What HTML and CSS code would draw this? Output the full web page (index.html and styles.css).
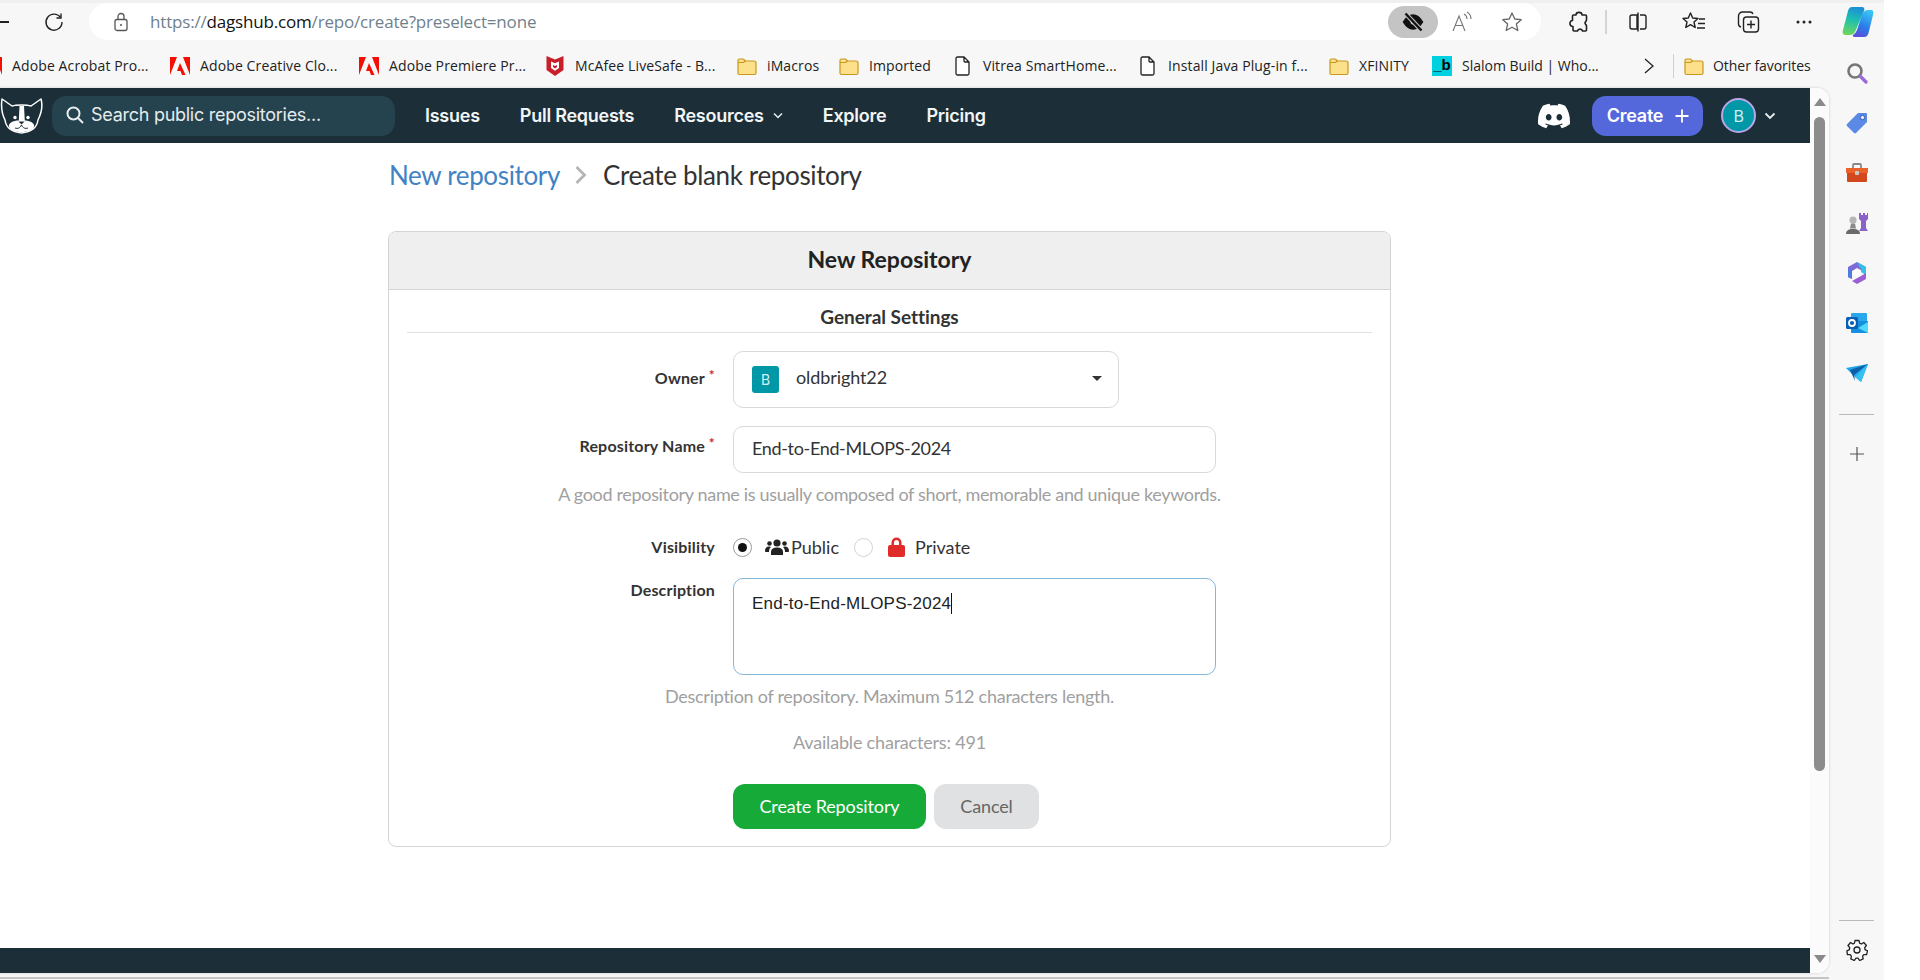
FILE: index.html
```html
<!DOCTYPE html>
<html lang="en">
<head>
<meta charset="utf-8">
<title>New Repository - DagsHub</title>
<link rel="stylesheet" href="styles.css">
</head>
<body>
<div class="window">
  <header class="toolbar">
    <span class="back-stub"></span>
    <svg class="tb-reload" width="22" height="22" viewBox="0 0 22 22" fill="none" stroke="#222" stroke-width="1.4"><path d="M17.5 6.5A8 8 0 1 0 19 11"/><path d="M18 2.5v4.5h-4.5"/></svg>
    <div class="address">
      <svg class="lock" width="16" height="20" viewBox="0 0 16 20" fill="none" stroke="#555" stroke-width="1.3"><rect x="2" y="7.5" width="12" height="11" rx="2"/><path d="M5 7.5V4.5a3 3 0 0 1 6 0v3"/><circle cx="8" cy="13" r="1" fill="#555" stroke="none"/></svg>
      <div class="url"><span class="url-dim">https://</span><span class="url-host">dagshub.com</span><span class="url-dim">/repo/create?preselect=none</span></div>
      <div class="addr-end">
        <span class="eye-pill">
          <svg width="22" height="22" viewBox="0 0 22 22" fill="none" stroke="#111" stroke-width="2.4"><path d="M2 11c3-5 6-6.500 9-6.500s6 1.500 9 6.500c-3 5-6 6.500-9 6.500S5 16 2 11z" fill="#111"/><circle cx="11" cy="11" r="2.500" fill="#c4c4c4" stroke="none"/><path d="M3.500 2.500 19.500 19.500" stroke="#c4c4c4" stroke-width="4.500"/><path d="M3.500 2.500 19.500 19.500"/></svg>
        </span>
        <svg class="read" width="24" height="22" viewBox="0 0 24 22" fill="none" stroke="#777" stroke-width="1.1"><path d="M2 20 8 5l6 15M4.500 14.500h7"/><path d="M13 3c2 1 3 3 3 5M16 1c2.500 1.500 4 4 4 7"/></svg>
        <svg class="star" width="24" height="24" viewBox="0 0 24 24" fill="none" stroke="#666" stroke-width="1.3" stroke-linejoin="round"><path d="m12 3 2.800 6 6.400.7-4.800 4.400 1.400 6.400L12 17.200 6.200 20.500l1.400-6.400L2.800 9.700 9.200 9z"/></svg>
      </div>
    </div>
    <div class="tb-tools">
      <svg class="t-ext" width="22" height="24" viewBox="0 0 22 24" fill="none" stroke="#222" stroke-width="1.6" stroke-linejoin="round"><path d="M8 5C8 1.500 14 1.500 14 5h3.500a1 1 0 0 1 1 1v3.500C19 11 17 11.500 17 13s2 2 1.500 3.500V20a1 1 0 0 1-1 1h-3c-.5-2.500-4.500-2.500-5 0H6a1 1 0 0 1-1-1v-3.500C1 16.500 1 10.500 4.500 10.500V6a1 1 0 0 1 1-1z"/></svg>
      <span class="tb-sep"></span>
      <svg class="t-split" width="20" height="22" viewBox="0 0 20 22" fill="none" stroke="#222" stroke-width="1.4"><path d="M9 4H4a2 2 0 0 0-2 2v10a2 2 0 0 0 2 2h5zM10 1.500v19M12 4h4a2 2 0 0 1 2 2v10a2 2 0 0 1-2 2h-4"/></svg>
      <svg class="t-favs" width="26" height="24" viewBox="0 0 26 24" fill="none" stroke="#222" stroke-width="1.4" stroke-linejoin="round"><path d="m9.500 3 2.200 5 5.300.5-4 3.600 1.200 5.400-4.700-2.800-4.700 2.800 1.200-5.400-4-3.600 5.300-.5z"/><path d="M18 9h6M17 13.500h7M16 18h8"/></svg>
      <svg class="t-coll" width="24" height="24" viewBox="0 0 24 24" fill="none" stroke="#222" stroke-width="1.4"><path d="M4 17c-2-.5-2.500-2-2.500-3V6a4 4 0 0 1 4-4H13c1 0 2.500.5 3 2"/><rect x="6.500" y="7" width="15" height="15" rx="3"/><path d="M14 10.500v8M10 14.500h8"/></svg>
      <svg class="t-dots" width="20" height="6" viewBox="0 0 20 6" fill="#222"><circle cx="4" cy="3" r="1.500"/><circle cx="10" cy="3" r="1.500"/><circle cx="16" cy="3" r="1.500"/></svg>
      <svg class="t-copilot" width="32" height="30" viewBox="0 0 32 30"><defs><linearGradient id="cpa" x1="0.500" y1="0" x2="0.300" y2="1"><stop offset="0" stop-color="#1b8fd8"/><stop offset=".45" stop-color="#1fc0b0"/><stop offset="1" stop-color="#6fd65a"/></linearGradient><linearGradient id="cpb" x1="0.700" y1="0" x2="0.300" y2="1"><stop offset="0" stop-color="#39c6f4"/><stop offset=".6" stop-color="#2a7be8"/><stop offset="1" stop-color="#5a4fd8"/></linearGradient></defs><path d="M10 0h10c2 0 3 2 2 4L13 25c-1 2-3 3-5 3H4c-3 0-4-2-3-5L6 4c.700-2.500 2-4 4-4z" fill="url(#cpa)"/><path d="M22 30H13c-2 0-2.500-1-2-2 2-1 3-3 4-5l5-15c1-3 3-5 6-5h3c2 0 3 2 2 5l-4 16c-.700 4-2 6-5 6z" fill="url(#cpb)"/></svg>
    </div>
  </header>

  <div class="left-col">
    <nav class="bookmarks">
      <a class="bm bm-first"><svg class="ic-adobe" width="20" height="20" viewBox="0 0 20 20"><path d="M0 1h7L0 19zM13 1h7v18zM10 7l5.500 12h-3.500l-1.500-4H7z" fill="#f40f02"/></svg><span class="bm-label w138">Adobe Acrobat Pro...</span></a>
      <a class="bm"><svg class="ic-adobe" width="20" height="20" viewBox="0 0 20 20"><path d="M0 1h7L0 19zM13 1h7v18zM10 7l5.500 12h-3.500l-1.500-4H7z" fill="#f40f02"/></svg><span class="bm-label w139">Adobe Creative Clo...</span></a>
      <a class="bm"><svg class="ic-adobe" width="20" height="20" viewBox="0 0 20 20"><path d="M0 1h7L0 19zM13 1h7v18zM10 7l5.500 12h-3.500l-1.500-4H7z" fill="#f40f02"/></svg><span class="bm-label w136">Adobe Premiere Pr...</span></a>
      <a class="bm"><svg width="20" height="22" viewBox="0 0 20 22"><path d="M1.500 1 10 4.500 18.500 1v14L10 21 1.500 15z" fill="#c8202a"/><path d="M6 6.500l4 1.800 4-1.800v6.500L10 15.800 6 13z" fill="#fff"/><path d="M8 10l2 1 2-1v2l-2 1.500L8 12z" fill="#c8202a"/></svg><span class="bm-label w142">McAfee LiveSafe - B...</span></a>
      <a class="bm"><svg class="ic-folder" width="20" height="20" viewBox="0 0 20 20"><use href="#folder"/></svg><span class="bm-label w52">iMacros</span></a>
      <a class="bm"><svg class="ic-folder" width="20" height="20" viewBox="0 0 20 20"><use href="#folder"/></svg><span class="bm-label w62">Imported</span></a>
      <a class="bm bm-doc"><svg width="18" height="20" viewBox="0 0 18 20"><use href="#doc"/></svg><span class="bm-label w133">Vitrea SmartHome...</span></a>
      <a class="bm bm-doc"><svg width="18" height="20" viewBox="0 0 18 20"><use href="#doc"/></svg><span class="bm-label w143">Install Java Plug-in f...</span></a>
      <a class="bm bm-xf"><svg class="ic-folder" width="20" height="20" viewBox="0 0 20 20"><use href="#folder"/></svg><span class="bm-label w52">XFINITY</span></a>
      <a class="bm bm-sl"><span class="slalom">_b</span><span class="bm-label w136">Slalom Build | Who...</span></a>
      <svg class="bm-more" width="12" height="18" viewBox="0 0 12 18" fill="none" stroke="#222" stroke-width="1.3"><path d="m2 2 8 7-8 7"/></svg>
      <span class="bm-sep"></span>
      <a class="bm bm-other"><svg class="ic-folder" width="20" height="20" viewBox="0 0 20 20"><use href="#folder"/></svg><span class="bm-label">Other favorites</span></a>
    </nav>

    <div class="viewport">
      <div class="page">
        <div class="site-nav">
          <svg class="dog" width="44" height="40" viewBox="0 0 44 40">
            <path d="M2 3 12 10C16 8.500 27 8.500 31 10L41 3C43 10 41 18 38 24 37 31 32 36 21.500 37 11 36 6 31 5 24 2 18 1 10 2 3Z" fill="#1c2e38" stroke="#fff" stroke-width="1.500" stroke-linejoin="round"/>
            <path d="M19.500 10h4.500l.8 15h-6z" fill="#fff"/>
            <path d="M9 31C8 27 13 24.500 19 24.500h5C30 24.500 35 27 34 31 32 35 27 36 21.500 36 16 36 11 35 9 31Z" fill="#fff"/>
            <path d="M18.500 25.500h6l-3 3z" fill="#1c2e38"/>
            <path d="M15 32c3 1 5 0 6.500-3 1.500 3 3.500 4 6.500 3" fill="none" stroke="#1c2e38" stroke-width="1"/>
            <circle cx="15" cy="21.500" r="1.700" fill="#fff"/>
            <circle cx="28" cy="21.500" r="1.700" fill="#fff"/>
          </svg>
          <div class="search">
            <svg width="20" height="20" viewBox="0 0 20 20" fill="none" stroke="#e8edef" stroke-width="2"><circle cx="8.500" cy="8.500" r="6"/><path d="m13 13 5 5"/></svg>
            <span>Search public repositories...</span>
          </div>
          <a class="nl nl-issues">Issues</a>
          <a class="nl">Pull Requests</a>
          <a class="nl">Resources<svg class="caret" width="12" height="8" viewBox="0 0 12 8" fill="none" stroke="#e8edef" stroke-width="1.500"><path d="m2 1.500 4 4 4-4"/></svg></a>
          <a class="nl nl-explore">Explore</a>
          <a class="nl">Pricing</a>
          <svg class="discord" width="32" height="32" viewBox="0 0 24 24" fill="#fff"><path d="M20.317 4.3698a19.7913 19.7913 0 00-4.8851-1.5152.0741.0741 0 00-.0785.0371c-.211.3753-.4447.8648-.6083 1.2495-1.8447-.2762-3.68-.2762-5.4868 0-.1636-.3933-.4058-.8742-.6177-1.2495a.077.077 0 00-.0785-.037 19.7363 19.7363 0 00-4.8852 1.515.0699.0699 0 00-.0321.0277C.5334 9.0458-.319 13.5799.0992 18.0578a.0824.0824 0 00.0312.0561c2.0528 1.5076 4.0413 2.4228 5.9929 3.0294a.0777.0777 0 00.0842-.0276c.4616-.6304.8731-1.2952 1.226-1.9942a.076.076 0 00-.0416-.1057c-.6528-.2476-1.2743-.5495-1.8722-.8923a.077.077 0 01-.0076-.1277c.1258-.0943.2517-.1923.3718-.2914a.0743.0743 0 01.0776-.0105c3.9278 1.7933 8.18 1.7933 12.0614 0a.0739.0739 0 01.0785.0095c.1202.099.246.1981.3728.2924a.077.077 0 01-.0066.1276 12.2986 12.2986 0 01-1.873.8914.0766.0766 0 00-.0407.1067c.3604.698.7719 1.3628 1.225 1.9932a.076.076 0 00.0842.0286c1.961-.6067 3.9495-1.5219 6.0023-3.0294a.077.077 0 00.0313-.0552c.5004-5.177-.8382-9.6739-3.5485-13.6604a.061.061 0 00-.0312-.0286zM8.02 15.3312c-1.1825 0-2.1569-1.0857-2.1569-2.419 0-1.3332.9555-2.4189 2.157-2.4189 1.2108 0 2.1757 1.0952 2.1568 2.419 0 1.3332-.9555 2.4189-2.1569 2.4189zm7.9748 0c-1.1825 0-2.1569-1.0857-2.1569-2.419 0-1.3332.9554-2.4189 2.1569-2.4189 1.2108 0 2.1757 1.0952 2.1568 2.419 0 1.3332-.946 2.4189-2.1568 2.4189Z"/></svg>
          <a class="create-btn">Create<svg width="16" height="16" viewBox="0 0 16 16" fill="none" stroke="#fff" stroke-width="1.800"><path d="M8 1.500v13M1.500 8h13"/></svg></a>
          <span class="nav-avatar">B</span>
          <svg class="user-caret" width="12" height="8" viewBox="0 0 12 8" fill="none" stroke="#e8edef" stroke-width="1.800"><path d="m1.500 1.500 4.500 4.500 4.500-4.500"/></svg>
        </div>

        <main class="content">
          <div class="crumbs">
            <a class="crumb-link">New repository</a>
            <svg width="14" height="22" viewBox="0 0 14 22" fill="none" stroke="#b5b5b5" stroke-width="2.800"><path d="m2.500 3 8 8-8 8"/></svg>
            <span class="crumb-cur">Create blank repository</span>
          </div>

          <section class="card">
            <h1 class="card-head">New Repository</h1>
            <div class="form">
              <h2 class="section-title">General Settings</h2>

              <div class="row row-owner">
                <label class="lbl req">Owner</label>
                <div class="select">
                  <span class="owner-av">B</span>
                  <span class="owner-name">oldbright22</span>
                  <span class="sel-arrow"></span>
                </div>
              </div>

              <div class="row row-name">
                <label class="lbl req">Repository Name</label>
                <div class="input">End-to-End-MLOPS-2024</div>
              </div>
              <p class="hint hint-name">A good repository name is usually composed of short, memorable and unique keywords.</p>

              <div class="row row-vis">
                <label class="lbl">Visibility</label>
                <div class="radios">
                  <span class="radio on"></span>
                  <svg class="ic-people" width="24" height="18" viewBox="0 0 24 18" fill="#222"><circle cx="12" cy="5" r="3.600"/><circle cx="4.500" cy="5.500" r="2.300"/><circle cx="19.500" cy="5.500" r="2.300"/><path d="M6 17v-3c0-3 2-4.500 6-4.500s6 1.500 6 4.500v3z"/><path d="M0 13c0-3 1.500-4.500 4-4.500 1 0 1.500.2 2 .5-1.500 1-2 3-2 5H1c-.5 0-1-.5-1-1zM24 13c0-3-1.500-4.500-4-4.500-1 0-1.500.2-2 .5 1.500 1 2 3 2 5h3c.5 0 1-.5 1-1z"/></svg>
                  <span class="r-text r-public">Public</span>
                  <span class="radio"></span>
                  <svg class="ic-lock" width="17" height="20" viewBox="0 0 17 20" fill="#e02b2b"><path d="M3.500 8V5.500a5 5 0 0 1 10 0V8h-2.500V5.500a2.500 2.500 0 0 0-5 0V8z"/><rect y="8" width="17" height="12" rx="2"/></svg>
                  <span class="r-text">Private</span>
                </div>
              </div>

              <div class="row row-desc">
                <label class="lbl">Description</label>
                <div class="textarea"><span class="ta-text">End-to-End-MLOPS-2024</span><span class="ta-caret"></span></div>
              </div>
              <p class="hint hint-desc">Description of repository. Maximum 512 characters length.</p>
              <p class="hint hint-avail">Available characters: 491</p>

              <div class="row row-actions">
                <span></span>
                <div class="actions">
                  <a class="btn btn-green">Create Repository</a>
                  <a class="btn btn-grey">Cancel</a>
                </div>
              </div>
            </div>
          </section>
        </main>

        <footer class="site-footer"></footer>
      </div>

      <div class="scrollbar">
        <span class="sb-up"></span>
        <span class="sb-thumb"></span>
        <span class="sb-down"></span>
      </div>
    </div>
  </div>

  <aside class="side">
    <svg class="s-item" width="24" height="50" viewBox="0 0 24 24" fill="none"><circle cx="10" cy="10" r="6.500" stroke="#777" stroke-width="2.600"/><path d="m15.500 15.500 5.500 5.500" stroke="#9a6ad8" stroke-width="3.400" stroke-linecap="round"/></svg>
    <svg class="s-item" width="24" height="50" viewBox="0 0 24 24"><path d="M13 2h8a1 1 0 0 1 1 1v8L11 22a1.500 1.500 0 0 1-2 0L2 15a1.500 1.500 0 0 1 0-2z" fill="#5a8ae6"/><circle cx="17.500" cy="6.500" r="2.200" fill="#e8e8ff" stroke="#3a5ab0"/></svg>
    <svg class="s-item s-tool" width="24" height="50" viewBox="0 0 24 22"><path d="M8 6V3a1 1 0 0 1 1-1h6a1 1 0 0 1 1 1v3" fill="none" stroke="#888" stroke-width="1.800"/><path d="M1 6h22v5H1z" fill="#e8622a"/><path d="M2 11h20v8a1 1 0 0 1-1 1H3a1 1 0 0 1-1-1z" fill="#d2481c"/><rect x="10" y="9" width="4" height="4" rx="1" fill="#c9c9c9"/></svg>
    <svg class="s-item" width="24" height="50" viewBox="0 0 24 24"><path d="M14 2h2v2h2V2h2v2h2V2h1v6l-2 2v7l2 3H14l2-3v-7l-2-2z" fill="#8a62c8"/><circle cx="8" cy="9" r="3.600" fill="#b5b5b5"/><path d="M6 12.500h4l1 5H5z" fill="#8a8a8a"/><path d="M1 23c0-3 2-5 7-5s7 2 7 5z" fill="#6a6a6a"/></svg>
    <svg class="s-item" width="22" height="50" viewBox="0 0 22 24"><path d="M11 1 20 6v6L11 7 6 10V18L2 16V6z" fill="#7b6cd8"/><path d="M11 1l9 5v8l-5-3V8z" fill="#35c0e8"/><path d="M20 12v6l-9 5-5-3 9-5z" fill="#9a5fd0"/><path d="M2 8l4 2v8l-4-2z" fill="#4f7ce0"/><circle cx="11" cy="12" r="3.500" fill="#fff"/></svg>
    <svg class="s-item" width="24" height="50" viewBox="0 0 24 22"><rect x="6" y="1" width="16" height="10" rx="1" fill="#28a8ea"/><path d="M6 9h17v11a1 1 0 0 1-1 1H7a1 1 0 0 1-1-1z" fill="#1490df"/><path d="M23 10 13 16l10 5z" fill="#50d9ff"/><rect x="1" y="5" width="12" height="12" rx="1.500" fill="#0a5fb4"/><circle cx="7" cy="11" r="3" fill="none" stroke="#fff" stroke-width="1.800"/></svg>
    <svg class="s-item" width="24" height="50" viewBox="0 0 24 20"><path d="M1 5 23 1 16 19 10 14z" fill="#1ea5e8"/><path d="M5 7 23 1 9 12l1 6z" fill="#0f5fa8"/><path d="M23 1 10 14l6 5z" fill="#35c0f0"/></svg>
    <span class="s-sep s-sep-top"></span>
    <svg class="s-plus" width="16" height="16" viewBox="0 0 16 16" fill="none" stroke="#555" stroke-width="1.200"><path d="M8 1v14M1 8h14"/></svg>
    <span class="s-grow"></span>
    <span class="s-sep"></span>
    <svg class="s-gear" width="22" height="22" viewBox="0 0 22 22" fill="none" stroke="#222" stroke-width="1.300" stroke-linejoin="round"><path d="M9 1.500h4l.6 2.700 1.800.8 2.400-1.500 2.600 3-1.700 2.200.3 2 2.500 1.100-.9 3.900-2.800-.1-1.200 1.500.6 2.700-3.600 1.700-1.600-2.300h-2l-1.600 2.300-3.600-1.700.6-2.700-1.200-1.500-2.800.1L.9 11.800l2.500-1.100.3-2L2 6.500l2.600-3L7 5l1.400-.8z"/><circle cx="11" cy="11" r="3"/></svg>
  </aside>
</div>

<svg class="defs" width="0" height="0">
  <symbol id="folder" viewBox="0 0 20 20"><path d="M1 4.500A1.500 1.500 0 0 1 2.500 3h4L8.500 5H17a2 2 0 0 1 2 2v10a1.500 1.500 0 0 1-1.500 1.500h-15A1.500 1.500 0 0 1 1 17z" fill="#fde08a" stroke="#c9971c" stroke-width="1.200"/><path d="M1 6.500h5.500L8.500 5" fill="none" stroke="#c9971c" stroke-width="1.200"/></symbol>
  <symbol id="doc" viewBox="0 0 18 20"><path d="M3.500 1H10l5 5v11.500a1.500 1.500 0 0 1-1.500 1.500h-10A1.500 1.500 0 0 1 2 17.500v-15A1.500 1.500 0 0 1 3.500 1zM10 1v4a1 1 0 0 0 1 1h4" fill="#fff" stroke="#222" stroke-width="1.300"/></symbol>
</svg>
</body>
</html>
```

FILE: styles.css
```css
* { box-sizing: border-box; }
html, body { margin: 0; height: 100%; overflow: hidden; background: #fff; }
body { font-family: "Lato", "Liberation Sans", sans-serif; color: #333; }
a { text-decoration: none; color: inherit; }
h1, h2, p { margin: 0; font-weight: inherit; }
.defs { display: block; }

.window {
  width: 1884px; height: 980px; background: #f7f7f7;
  display: grid; grid-template-columns: 1829px 55px; grid-template-rows: 44px 936px;
}

/* browser toolbar */
.toolbar {
  grid-column: 1 / 3; display: flex; align-items: center;
  background: linear-gradient(#f0f0f0 3px, #f7f7f7 3px);
  height: 44px;
}
.back-stub { width: 9px; height: 1.500px; background: #222; margin-right: 34px; }
.tb-reload { margin-right: 24px; }
.address {
  width: 1452px; height: 37px; margin-top: -1px; background: #fff; border-radius: 19px;
  display: flex; align-items: center; padding-left: 24px;
}
.url { margin-left: 21px; font: 17px/22px "Open Sans", sans-serif; letter-spacing: -.18px; }
.url-dim { color: #6f7f8c; }
.url-host { color: #111; }
.addr-end { margin-left: auto; display: flex; align-items: center; padding-right: 17px; }
.eye-pill {
  width: 50px; height: 32px; border-radius: 16px; background: #c4c4c4;
  display: flex; align-items: center; justify-content: center; margin-right: 13px;
}
.read { margin-right: 25px; }
.tb-tools { display: flex; align-items: center; margin-left: 27px; }
.tb-sep { width: 2px; height: 24px; background: #d4d4d4; margin: 0 21px 0 15px; }
.t-split { margin-right: 33px; }
.t-favs { margin-right: 30px; }
.t-coll { margin-right: 33px; }
.t-dots { margin-right: 28px; }

/* left column */
.left-col { display: flex; flex-direction: column; min-height: 0; border-bottom: 2px solid #c4c4c4; margin-bottom: 1px; }
.bookmarks {
  height: 44px; flex: none; display: flex; align-items: center; overflow: hidden;
  font: 14px/20px "Open Sans", sans-serif; color: #222; letter-spacing: .12px;
  margin-left: -18px; gap: 20px;
}
.bm { display: flex; align-items: center; gap: 10px; flex: none; white-space: nowrap; }
.bm-label { display: block; overflow: visible; }
.w138 { width: 138px; } .w139 { width: 139px; } .w136 { width: 136px; }
.w142 { width: 142px; } .w52 { width: 52px; } .w62 { width: 62px; }
.w133 { width: 133px; } .w143 { width: 143px; }
.bm-doc { gap: 11px; margin-left: 3px; }
.bm-xf { margin-left: -2px; }
.bm-sl { margin-left: 1px; letter-spacing: 0; }
.slalom {
  width: 20px; height: 20px; background: #00d1e0; color: #000;
  font: 700 15px/18px "Liberation Sans", sans-serif; text-align: center; letter-spacing: 0;
}
.bm-more { margin-left: 25px; flex: none; }
.bm-sep { width: 1px; height: 24px; background: #d0d0d0; margin-left: -2px; flex: none; }
.bm-other { margin-left: -10px; gap: 9px; letter-spacing: -.05px; }

.viewport {
  flex: 1; min-height: 0; margin-bottom: 4px; display: flex; background: #fff;
  border-radius: 0 12px 12px 0; overflow: hidden; box-shadow: 0 0 3px rgba(0,0,0,.18);
}
.page { width: 1810px; display: flex; flex-direction: column; background: #fff; }

/* site nav */
.site-nav {
  height: 55px; flex: none; background: #1c2e38; display: flex; align-items: center;
  font: 600 18px/24px "Inter", sans-serif; color: #f2f5f6; letter-spacing: -.25px;
}
.dog { flex: none; }
.search {
  width: 343px; height: 40px; margin-left: 8px; border-radius: 14px; background: #25424f;
  display: flex; align-items: center; gap: 6px; padding-left: 13px; padding-bottom: 1px;
  font-weight: 400; color: #e6ecee; letter-spacing: -.27px;
}
.nl { margin-left: 40px; display: flex; align-items: center; }
.nl-issues { margin-left: 30px; }
.nl-explore { margin-left: 39px; }
.caret { margin-left: 8px; }
.discord { margin-left: auto; }
.create-btn {
  margin-left: 22px; width: 111px; height: 40px; border-radius: 14px; background: #5468dc; color: #fff;
  display: flex; align-items: center; justify-content: center; gap: 11px; padding-left: 2px;
}
.nav-avatar {
  margin-left: 18px; width: 35px; height: 35px; border-radius: 50%; background: #0097a7;
  border: 2px solid #b9a6e8; color: #cfeef2; display: flex; align-items: center; justify-content: center;
  font-weight: 400; font-size: 16px;
}
.user-caret { margin: 0 34px 0 8px; }

/* content */
.content { flex: 1; min-height: 0; padding-left: 388px; }
.crumbs {
  height: 64px; padding-left: 1px; display: flex; align-items: center; gap: 14px;
  font-size: 26px; letter-spacing: -.35px;
}
.crumb-link { color: #4183c4; }
.crumb-cur { color: #333; margin-left: 1px; }

.card {
  width: 1003px; height: 616px; margin-top: 24px; border: 1px solid #d4d4d5; border-radius: 8px; background: #fff;
}
.card-head {
  height: 58px; background: #efefef; border-bottom: 1px solid #d4d4d5; border-radius: 7px 7px 0 0;
  text-align: center; font: 700 23px/54px "Lato", sans-serif; color: #222;
}
.form { padding: 0 18px; }
.section-title {
  height: 43px; border-bottom: 1px solid #e0e0e0; text-align: center;
  font: 700 19px/53px "Lato", sans-serif; color: #333; letter-spacing: -.05px;
}
.row { display: grid; grid-template-columns: 308px 1fr; column-gap: 18px; }
.lbl { font: 700 16px/20px "Lato", sans-serif; text-align: right; color: #333; letter-spacing: .18px; }
.req { padding-right: 10px; position: relative; }
.req::after { content: "*"; position: absolute; right: 0; top: -3px; color: #db2828; font-size: 14px; }

.row-owner { margin-top: 18px; align-items: start; }
.row-owner .lbl { margin-top: 17px; }
.select {
  width: 386px; height: 57px; border: 1px solid #d9d9d9; border-radius: 10px; display: flex; align-items: center;
  padding-left: 18px; font-size: 18px; color: #333;
}
.owner-av {
  width: 27px; height: 27px; background: #0097a7; color: #d5f0f3; border-radius: 3px; font: 400 14px/27px "Inter", sans-serif;
  text-align: center;
}
.owner-name { margin-left: 17px; margin-top: -5px; letter-spacing: -.1px; }
.sel-arrow {
  margin-left: auto; margin-right: 16px; margin-top: -2px; width: 0; height: 0; border: 5px solid transparent; border-top: 5px solid #333; border-bottom: 0;
}
.row-name { margin-top: 18px; }
.row-name .lbl { margin-top: 10px; }
.input {
  width: 483px; height: 47px; border: 1px solid #d9d9d9; border-radius: 10px; padding-left: 18px;
  font-size: 18px; line-height: 43px; color: #333; letter-spacing: -.34px;
}
.hint { text-align: center; font-size: 18px; line-height: 24px; color: #a0a0a0; letter-spacing: -.33px; }
.hint-name { margin-top: 9px; }
.row-vis { margin-top: 28px; align-items: center; height: 26px; }
.radios { display: flex; align-items: center; font-size: 18px; color: #333; }
.radio {
  width: 19px; height: 19px; border-radius: 50%; border: 1px solid #d4d4d5; background: #fff; position: relative; flex: none;
}
.radio.on { border-color: #9b9b9b; }
.radio.on::after { content: ""; position: absolute; inset: 4px; border-radius: 50%; background: #111; }
.ic-people { margin-left: 13px; flex: none; }
.r-text { margin-left: 2px; }
.r-public { margin-right: 15px; }
.ic-lock { margin-left: 15px; flex: none; }
.ic-lock + .r-text { margin-left: 10px; }
.row-desc { margin-top: 18px; }
.row-desc .lbl { margin-top: 2px; }
.textarea {
  width: 483px; height: 97px; border: 1px solid #85b7d9; border-radius: 10px; padding: 14px 18px;
  font: 17px/22px "Liberation Sans", sans-serif; letter-spacing: .22px; color: #222; display: flex; align-items: flex-start;
}
.ta-caret { width: 1px; height: 21px; background: #111; }
.hint-desc { margin-top: 9px; letter-spacing: -.27px; }
.hint-avail { margin-top: 22px; letter-spacing: -.19px; }
.row-actions { margin-top: 30px; }
.actions { display: flex; gap: 8px; }
.btn {
  height: 45px; border-radius: 12px; display: flex; align-items: center; justify-content: center; font-size: 18px; letter-spacing: -.12px; padding-bottom: 1px;
}
.btn-green { width: 193px; background: #16ab39; color: #fff; }
.btn-grey { width: 105px; background: #e0e1e2; color: #666; }

.site-footer { height: 25px; flex: none; background: #1c2e38; }

/* scrollbar */
.scrollbar { width: 19px; background: #fbfbfb; display: flex; flex-direction: column; align-items: center; }
.sb-up { width: 0; height: 0; margin-top: 10px; border: 6px solid transparent; border-bottom: 8px solid #8a8a8a; border-top: 0; }
.sb-thumb { width: 11px; height: 654px; margin-top: 11px; background: #8c8c8c; border-radius: 6px; }
.sb-down { width: 0; height: 0; margin-top: auto; margin-bottom: 10px; border: 6px solid transparent; border-top: 8px solid #8a8a8a; border-bottom: 0; }

/* edge sidebar */
.side { display: flex; flex-direction: column; align-items: center; height: 933px; padding-top: 4px; }
.s-item { flex: none; }
.s-sep { width: 35px; height: 1px; background: #bbb; flex: none; }
.s-sep-top { margin-top: 16px; }
.s-plus { margin-top: 31px; flex: none; }
.s-grow { flex: 1; }
.s-gear { margin: 18px 0 16px; flex: none; }
```
